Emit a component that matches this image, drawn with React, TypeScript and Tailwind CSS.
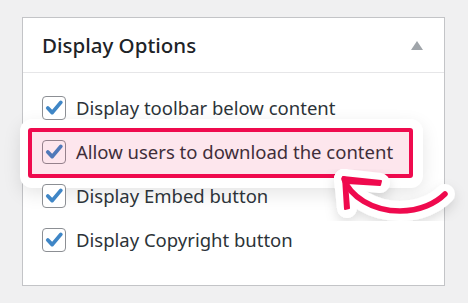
import React from "react";

const font = { fontFamily: '"Noto Sans", "Open Sans", sans-serif' };

function Check() {
  return (
    <div className="relative z-10 flex h-[24px] w-[24px] shrink-0 items-center justify-center rounded-[4px] border border-[#8c8f94] bg-white">
      <svg width="22" height="22" viewBox="0 0 22 22">
        <path d="M4.8 11 L9.2 15.6 L17.8 5.4" fill="none" stroke="#3f86c6" strokeWidth="3.8" strokeLinecap="round" strokeLinejoin="round" />
      </svg>
    </div>
  );
}

function Row({ label }: { label: string }) {
  return (
    <div className="flex h-[44px] items-center gap-[10px] pl-[19px]">
      <Check />
      <span className="relative z-10 text-[18.5px] leading-none text-[#2c3338]">{label}</span>
    </div>
  );
}

export default function App() {
  return (
    <div className="relative h-[303px] w-[468px] overflow-hidden bg-[#f0f0f1] pl-[22px] pt-[17px]" style={font}>
      <div className="flex h-[269px] w-[423px] flex-col border border-[#c3c4c7] bg-white">
        <div className="flex h-[55px] shrink-0 items-center justify-between border-b border-[#e6e6e8] pl-[19px] pr-[21px]">
          <span className="text-[20.5px] font-medium leading-none text-[#1d2327]">Display Options</span>
          <svg width="12" height="9" viewBox="0 0 12 9">
            <polygon points="0,9 6,0 12,9" fill="#a0a5aa" />
          </svg>
        </div>
        <div className="flex flex-col pt-[13px]">
          <Row label="Display toolbar below content" />
          <div className="relative flex h-[44px] items-center gap-[10px] pl-[19px]">
            <div className="absolute left-[-3px] top-[-11px] h-[69px] w-[403px] rounded-[12px] bg-white shadow-[0_6px_18px_rgba(0,0,0,0.10)]" />
            <Check />
            <span className="relative z-10 text-[18.5px] leading-none text-[#2c3338]">Allow users to download the content</span>
            <div className="pointer-events-none absolute left-[5px] top-[-2px] z-20 h-[50px] w-[385px] rounded-[3px] border-4 border-[#ef0a4e] bg-[rgba(240,10,78,0.1)]" />
          </div>
          <Row label="Display Embed button" />
          <Row label="Display Copyright button" />
        </div>
      </div>
      <svg className="pointer-events-none absolute left-0 top-0 z-30" width="468" height="303" viewBox="0 0 468 303">
        <defs>
          <filter id="sh" x="-30%" y="-30%" width="160%" height="160%">
            <feDropShadow dx="0" dy="5" stdDeviation="6" floodColor="#000" floodOpacity="0.13" />
          </filter>
        </defs>
        <g filter="url(#sh)" fill="none" stroke="#ffffff" strokeWidth="20" strokeLinecap="round" strokeLinejoin="round">
          <path d="M344 179 C 350 196, 372 211, 400 211 C 420 211, 436 203, 445 194" />
          <path d="M344 179 L 380 183" />
          <path d="M344 179 L 347 208" />
        </g>
        <g fill="#ef0a4e" stroke="#ef0a4e" strokeLinecap="round" strokeLinejoin="round">
          <path d="M344 179 C 350 196, 372 211, 400 211 C 420 211, 436 203, 445 194" fill="none" strokeWidth="5.5" />
          <path d="M343 177 L 381 181 L 380 185 L 347 183 L 349 208 L 345 209 Z" strokeWidth="2" />
        </g>
      </svg>
    </div>
  );
}
